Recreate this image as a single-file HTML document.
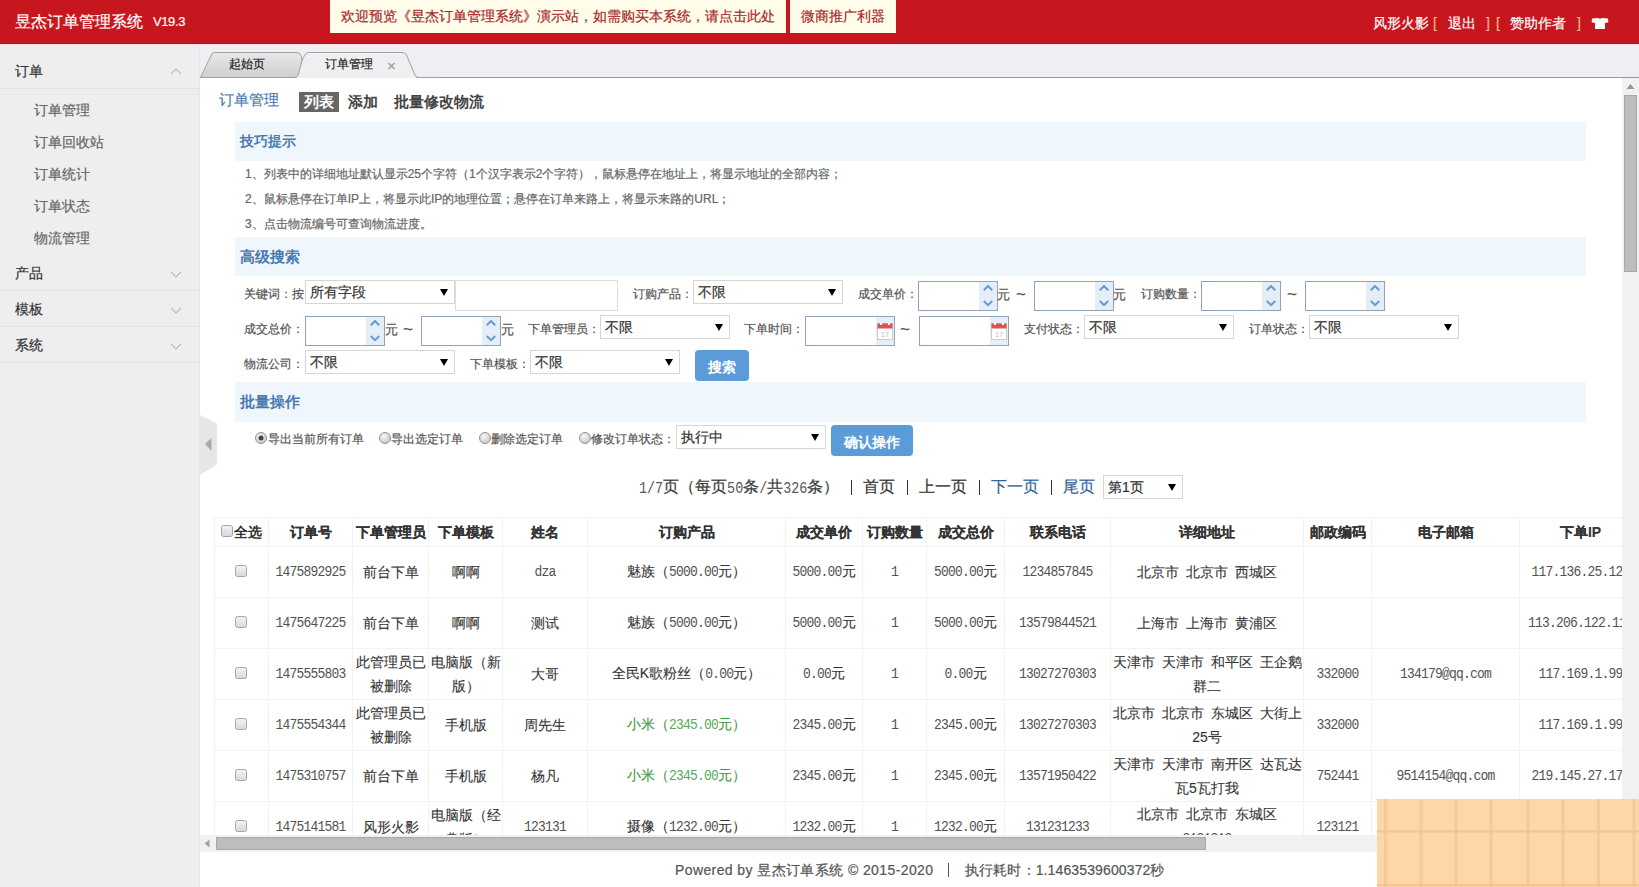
<!DOCTYPE html><html><head><meta charset="utf-8"><style>
*{margin:0;padding:0;box-sizing:border-box}
html,body{width:1639px;height:887px;overflow:hidden;background:#fff;font-family:"Liberation Sans",sans-serif;color:#333;-webkit-text-stroke-width:0.2px}
.a{position:absolute;white-space:nowrap}
#hdr{position:absolute;left:0;top:0;width:1639px;height:45px;background:linear-gradient(#c8161f 0,#c8161f 41px,#bd1a26 41px,#bd1a26 43px,#a11623 43px,#a11623 44px,#fde6e3 44px);z-index:5}
#side{position:absolute;left:0;top:43px;width:200px;height:844px;background:#eee;border-right:1px solid #e6e6e8}
#tabbar{position:absolute;left:200px;top:43px;width:1439px;height:35px;background:#efeef3}
#content{position:absolute;left:200px;top:78px;width:1439px;height:774px;background:#fff;overflow:hidden}
#footer{position:absolute;left:200px;top:852px;width:1439px;height:35px;background:#fff}
.note{position:absolute;top:0;height:33px;background:#fffcea;color:#a82a2a;font-size:14px;line-height:33px}
.mh{position:absolute;left:0;width:199px;height:36px;border-bottom:1px solid #e2e2e2;font-size:14px;color:#333;line-height:36px;padding-left:15px}
.mi{position:absolute;left:34px;font-size:14px;color:#666;line-height:32px;height:32px;white-space:nowrap}
.chev{position:absolute;left:171px}
.sec{position:absolute;left:35px;width:1351px;background:#eff6fc;color:#4a7bb0;font-weight:bold;font-size:15px;padding-left:5px}
.tip{position:absolute;left:45px;font-size:12px;color:#666;line-height:25px;white-space:nowrap}
.lbl{position:absolute;font-size:12px;color:#555;line-height:24px;white-space:nowrap}
.sel{position:absolute;width:150px;height:24px;border:1px solid #d6d6d6;background:#fff;font-size:14px;color:#333;line-height:22px;padding-left:4px;white-space:nowrap}
.sel:after{content:"";position:absolute;right:6px;top:8px;border-left:4px solid transparent;border-right:4px solid transparent;border-top:7px solid #000}
.num{position:absolute;width:80px;height:30px;border:1px solid #93a3b5;background:#fff}
.num .sp{position:absolute;right:0;top:0;width:18px;height:28px;background:#e4eef9}
.btn{position:absolute;background:#5b9bd8;color:#fff;font-weight:bold;font-size:14px;border-radius:4px;text-align:center;-webkit-text-stroke-width:0}
[style*="bold"],.sec{-webkit-text-stroke-width:0}
</style></head><body>
<div id="hdr">
<div class="a" style="left:15px;top:11px;font-size:16px;line-height:22px;color:#fff">昱杰订单管理系统</div>
<div class="a" style="left:153px;top:12px;font-size:13px;line-height:20px;color:#fff;letter-spacing:-0.4px">V19.3</div>
<div class="note" style="left:330px;width:456px;padding-left:11px">欢迎预览《昱杰订单管理系统》演示站，如需购买本系统，请点击此处</div>
<div class="note" style="left:790px;width:106px;padding-left:11px">微商推广利器</div>
<div class="a" style="left:1373px;top:12px;font-size:14px;line-height:22px;color:#fff">风形火影</div>
<div class="a" style="left:1433px;top:12px;font-size:14px;line-height:22px;color:#f5b98a">[</div>
<div class="a" style="left:1448px;top:12px;font-size:14px;line-height:22px;color:#fff">退出</div>
<div class="a" style="left:1486px;top:12px;font-size:14px;line-height:22px;color:#f5b98a">]</div>
<div class="a" style="left:1496px;top:12px;font-size:14px;line-height:22px;color:#f5b98a">[</div>
<div class="a" style="left:1510px;top:12px;font-size:14px;line-height:22px;color:#fff">赞助作者</div>
<div class="a" style="left:1577px;top:12px;font-size:14px;line-height:22px;color:#f5b98a">]</div>
<svg class="a" style="left:1591px;top:17px" width="18" height="12" viewBox="0 0 18 12"><path d="M1 1.5 L7 1 Q9 2.3 11 1 L17 1.5 L17.3 5.5 L14 5.8 L14 12 L4 12 L4 5.8 L0.7 5.5 Z" fill="#fff"/></svg>
</div>
<div id="side">
<div class="mh" style="top:10px">订单</div><svg class="chev" style="top:25px" width="11" height="7" viewBox="0 0 11 7"><path d="M0 6 L5 1 L10 6" fill="none" stroke="#bbb" stroke-width="1.2"/></svg>
<div class="a" style="left:0;top:51px;width:199px;height:1px;background:#e8e8e8"></div>
<div class="mi" style="top:51px">订单管理</div>
<div class="mi" style="top:83px">订单回收站</div>
<div class="mi" style="top:115px">订单统计</div>
<div class="mi" style="top:147px">订单状态</div>
<div class="mi" style="top:179px">物流管理</div>
<div class="mh" style="top:212px">产品</div><svg class="chev" style="top:228px" width="11" height="7" viewBox="0 0 11 7"><path d="M0 1 L5 6 L10 1" fill="none" stroke="#bbb" stroke-width="1.2"/></svg>
<div class="mh" style="top:248px">模板</div><svg class="chev" style="top:264px" width="11" height="7" viewBox="0 0 11 7"><path d="M0 1 L5 6 L10 1" fill="none" stroke="#bbb" stroke-width="1.2"/></svg>
<div class="mh" style="top:284px">系统</div><svg class="chev" style="top:300px" width="11" height="7" viewBox="0 0 11 7"><path d="M0 1 L5 6 L10 1" fill="none" stroke="#bbb" stroke-width="1.2"/></svg>
</div>
<div id="tabbar">
<div class="a" style="left:0;top:34px;width:1439px;height:1px;background:#999"></div>
<svg class="a" style="left:0;top:0" width="240" height="35" viewBox="0 0 240 35">
<defs><linearGradient id="g1" x1="0" y1="0" x2="0" y2="1"><stop offset="0" stop-color="#e8e8e8"/><stop offset="1" stop-color="#cfcfcf"/></linearGradient></defs>
<path d="M95 35 L102 18 Q104.5 10.5 108 9.5 L202 9.5 Q205 9.5 206.5 12 L215 32 Q216 34.5 219 34.5 L240 34.5 L240 35 Z" fill="#efeff1" stroke="#a0a0a0" stroke-width="1"/><path d="M108 10.5 L202 10.5" stroke="#fafafa" stroke-width="1"/>
<rect x="97" y="34" width="119" height="2" fill="#eeeef1"/>
<path d="M0.5 34.5 L12 10.5 Q13 9.5 15 9.5 L96 9.5 Q101.5 9.5 102 17 L98.5 31 Q97.5 34.5 94.5 34.5 Z" fill="url(#g1)" stroke="#a0a0a0" stroke-width="1"/>
</svg>
<div class="a" style="left:29px;top:12px;font-size:12px;line-height:18px;color:#222">起始页</div>
<div class="a" style="left:125px;top:12px;font-size:12px;line-height:18px;color:#222">订单管理</div>
<div class="a" style="left:187px;top:14px;font-size:15px;line-height:18px;color:#9a9a9a">×</div>
</div>
<div id="content">
<div class="a" style="left:19px;top:12px;font-size:15px;line-height:20px;color:#4a7bb0">订单管理</div>
<div class="a" style="left:99px;top:14px;width:40px;height:20px;background:#666;color:#fff;font-weight:bold;font-size:15px;line-height:20px;text-align:center">列表</div>
<div class="a" style="left:148px;top:14px;font-size:15px;line-height:20px;color:#444;font-weight:bold">添加</div>
<div class="a" style="left:194px;top:14px;font-size:15px;line-height:20px;color:#444;font-weight:bold">批量修改物流</div>
<div class="sec" style="left:35px;top:44px;height:39px;line-height:39px;font-size:14px">技巧提示</div>
<div class="tip" style="left:45px;top:84px">1、列表中的详细地址默认显示25个字符（1个汉字表示2个字符），鼠标悬停在地址上，将显示地址的全部内容；</div>
<div class="tip" style="left:45px;top:109px">2、鼠标悬停在订单IP上，将显示此IP的地理位置；悬停在订单来路上，将显示来路的URL；</div>
<div class="tip" style="left:45px;top:134px">3、点击物流编号可查询物流进度。</div>
<div class="sec" style="left:35px;top:159px;height:39px;line-height:39px">高级搜索</div>
<div class="sec" style="left:35px;top:304px;height:40px;line-height:40px">批量操作</div>
<div class="lbl" style="left:44px;top:204px">关键词：按</div>
<div class="sel" style="left:105px;top:202px;width:150px;font-size:14px">所有字段</div>
<div class="a" style="left:255px;top:202px;width:163px;height:31px;border:1px solid #dcdcdc;background:#fff"></div>
<div class="lbl" style="left:433px;top:204px">订购产品：</div>
<div class="sel" style="left:493px;top:202px;width:150px;font-size:14px">不限</div>
<div class="lbl" style="left:658px;top:204px">成交单价：</div>
<div class="num" style="left:718px;top:203px"><div class="sp"><svg style="position:absolute;left:4px;top:3px" width="10" height="22" viewBox="0 0 10 22"><path d="M0.8 5.2 L5 1 L9.2 5.2 M0.8 16 L5 20.2 L9.2 16" fill="none" stroke="#6b9ac8" stroke-width="2"/></svg></div></div>
<div class="a" style="left:797px;top:207px;font-size:13px;line-height:20px;color:#555;">元</div>
<div class="a" style="left:816px;top:207px;font-size:17px;line-height:20px;color:#555;">~</div>
<div class="num" style="left:834px;top:203px"><div class="sp"><svg style="position:absolute;left:4px;top:3px" width="10" height="22" viewBox="0 0 10 22"><path d="M0.8 5.2 L5 1 L9.2 5.2 M0.8 16 L5 20.2 L9.2 16" fill="none" stroke="#6b9ac8" stroke-width="2"/></svg></div></div>
<div class="a" style="left:913px;top:207px;font-size:13px;line-height:20px;color:#555;">元</div>
<div class="lbl" style="left:941px;top:204px">订购数量：</div>
<div class="num" style="left:1001px;top:203px"><div class="sp"><svg style="position:absolute;left:4px;top:3px" width="10" height="22" viewBox="0 0 10 22"><path d="M0.8 5.2 L5 1 L9.2 5.2 M0.8 16 L5 20.2 L9.2 16" fill="none" stroke="#6b9ac8" stroke-width="2"/></svg></div></div>
<div class="a" style="left:1087px;top:207px;font-size:17px;line-height:20px;color:#555;">~</div>
<div class="num" style="left:1105px;top:203px"><div class="sp"><svg style="position:absolute;left:4px;top:3px" width="10" height="22" viewBox="0 0 10 22"><path d="M0.8 5.2 L5 1 L9.2 5.2 M0.8 16 L5 20.2 L9.2 16" fill="none" stroke="#6b9ac8" stroke-width="2"/></svg></div></div>
<div class="lbl" style="left:44px;top:239px">成交总价：</div>
<div class="num" style="left:105px;top:238px"><div class="sp"><svg style="position:absolute;left:4px;top:3px" width="10" height="22" viewBox="0 0 10 22"><path d="M0.8 5.2 L5 1 L9.2 5.2 M0.8 16 L5 20.2 L9.2 16" fill="none" stroke="#6b9ac8" stroke-width="2"/></svg></div></div>
<div class="a" style="left:185px;top:242px;font-size:13px;line-height:20px;color:#555;">元</div>
<div class="a" style="left:203px;top:242px;font-size:17px;line-height:20px;color:#555;">~</div>
<div class="num" style="left:221px;top:238px"><div class="sp"><svg style="position:absolute;left:4px;top:3px" width="10" height="22" viewBox="0 0 10 22"><path d="M0.8 5.2 L5 1 L9.2 5.2 M0.8 16 L5 20.2 L9.2 16" fill="none" stroke="#6b9ac8" stroke-width="2"/></svg></div></div>
<div class="a" style="left:301px;top:242px;font-size:13px;line-height:20px;color:#555;">元</div>
<div class="lbl" style="left:328px;top:239px">下单管理员：</div>
<div class="sel" style="left:400px;top:237px;width:130px;font-size:14px">不限</div>
<div class="lbl" style="left:544px;top:239px">下单时间：</div>
<div class="num" style="left:605px;top:238px;width:90px"><div class="sp" style="width:18px;background:#e6eef7"><svg style="position:absolute;left:1px;top:6px" width="16" height="17" viewBox="0 0 16 17"><rect x="0.5" y="0.5" width="15" height="16" fill="#fff" stroke="#ccc"/><rect x="0.5" y="0.5" width="15" height="5" fill="#e05252"/><rect x="3" y="0" width="2" height="2" fill="#fff"/><rect x="11" y="0" width="2" height="2" fill="#fff"/><text x="8" y="14" font-size="7" fill="#bbb" text-anchor="middle" font-family="Liberation Sans">17</text></svg></div></div>
<div class="a" style="left:700px;top:242px;font-size:17px;line-height:20px;color:#555;">~</div>
<div class="num" style="left:719px;top:238px;width:90px"><div class="sp" style="width:18px;background:#e6eef7"><svg style="position:absolute;left:1px;top:6px" width="16" height="17" viewBox="0 0 16 17"><rect x="0.5" y="0.5" width="15" height="16" fill="#fff" stroke="#ccc"/><rect x="0.5" y="0.5" width="15" height="5" fill="#e05252"/><rect x="3" y="0" width="2" height="2" fill="#fff"/><rect x="11" y="0" width="2" height="2" fill="#fff"/><text x="8" y="14" font-size="7" fill="#bbb" text-anchor="middle" font-family="Liberation Sans">17</text></svg></div></div>
<div class="lbl" style="left:824px;top:239px">支付状态：</div>
<div class="sel" style="left:884px;top:237px;width:150px;font-size:14px">不限</div>
<div class="lbl" style="left:1049px;top:239px">订单状态：</div>
<div class="sel" style="left:1109px;top:237px;width:150px;font-size:14px">不限</div>
<div class="lbl" style="left:44px;top:274px">物流公司：</div>
<div class="sel" style="left:105px;top:272px;width:150px;font-size:14px">不限</div>
<div class="lbl" style="left:270px;top:274px">下单模板：</div>
<div class="sel" style="left:330px;top:272px;width:150px;font-size:14px">不限</div>
<div class="btn" style="left:495px;top:272px;width:54px;height:31px;line-height:35px">搜索</div>
<svg class="a" style="left:55px;top:354px" width="12" height="12" viewBox="0 0 12 12"><defs><radialGradient id="rg255" cx="0.4" cy="0.35" r="0.7"><stop offset="0" stop-color="#f8f8f8"/><stop offset="1" stop-color="#c4c4c4"/></radialGradient></defs><circle cx="6" cy="6" r="5.5" fill="url(#rg255)" stroke="#939393"/><circle cx="6" cy="6" r="2.5" fill="#444"/></svg>
<div class="a" style="left:68px;top:351px;font-size:12px;line-height:20px;color:#555;">导出当前所有订单</div>
<svg class="a" style="left:179px;top:354px" width="12" height="12" viewBox="0 0 12 12"><defs><radialGradient id="rg379" cx="0.4" cy="0.35" r="0.7"><stop offset="0" stop-color="#f8f8f8"/><stop offset="1" stop-color="#c4c4c4"/></radialGradient></defs><circle cx="6" cy="6" r="5.5" fill="url(#rg379)" stroke="#939393"/></svg>
<div class="a" style="left:191px;top:351px;font-size:12px;line-height:20px;color:#555;">导出选定订单</div>
<svg class="a" style="left:279px;top:354px" width="12" height="12" viewBox="0 0 12 12"><defs><radialGradient id="rg479" cx="0.4" cy="0.35" r="0.7"><stop offset="0" stop-color="#f8f8f8"/><stop offset="1" stop-color="#c4c4c4"/></radialGradient></defs><circle cx="6" cy="6" r="5.5" fill="url(#rg479)" stroke="#939393"/></svg>
<div class="a" style="left:291px;top:351px;font-size:12px;line-height:20px;color:#555;">删除选定订单</div>
<svg class="a" style="left:379px;top:354px" width="12" height="12" viewBox="0 0 12 12"><defs><radialGradient id="rg579" cx="0.4" cy="0.35" r="0.7"><stop offset="0" stop-color="#f8f8f8"/><stop offset="1" stop-color="#c4c4c4"/></radialGradient></defs><circle cx="6" cy="6" r="5.5" fill="url(#rg579)" stroke="#939393"/></svg>
<div class="a" style="left:391px;top:351px;font-size:12px;line-height:20px;color:#555;">修改订单状态：</div>
<div class="sel" style="left:476px;top:347px;width:150px;font-size:14px">执行中</div>
<div class="btn" style="left:631px;top:347px;width:82px;height:31px;line-height:35px">确认操作</div>
<div class="a" style="left:439px;top:399px;font-size:16px;line-height:20px;color:#3a3a3a"><span style="font-family:Liberation Mono,monospace;font-size:13.4px;display:inline-block;transform:scaleY(1.2);-webkit-text-stroke-width:0;opacity:0.85">1/7</span>页（每页<span style="font-family:Liberation Mono,monospace;font-size:13.4px;display:inline-block;transform:scaleY(1.2);-webkit-text-stroke-width:0;opacity:0.85">50</span>条<span style="font-family:Liberation Mono,monospace;font-size:13.4px;display:inline-block;transform:scaleY(1.2);-webkit-text-stroke-width:0;opacity:0.85">/</span>共<span style="font-family:Liberation Mono,monospace;font-size:13.4px;display:inline-block;transform:scaleY(1.2);-webkit-text-stroke-width:0;opacity:0.85">326</span>条）</div>
<div class="a" style="left:651px;top:402px;width:1px;height:15px;background:#333"></div>
<div class="a" style="left:707px;top:402px;width:1px;height:15px;background:#333"></div>
<div class="a" style="left:779px;top:402px;width:1px;height:15px;background:#333"></div>
<div class="a" style="left:851px;top:402px;width:1px;height:15px;background:#333"></div>
<div class="a" style="left:663px;top:399px;font-size:16px;line-height:20px;color:#333">首页</div>
<div class="a" style="left:719px;top:399px;font-size:16px;line-height:20px;color:#333">上一页</div>
<div class="a" style="left:791px;top:399px;font-size:16px;line-height:20px;color:#336699">下一页</div>
<div class="a" style="left:863px;top:399px;font-size:16px;line-height:20px;color:#336699">尾页</div>
<div class="sel" style="left:903px;top:397px;width:80px;font-size:14px">第1页</div>
<div class="a" style="left:14px;top:439px;width:1px;height:335px;background:#f2f2f2"></div>
<div class="a" style="left:68px;top:439px;width:1px;height:335px;background:#f2f2f2"></div>
<div class="a" style="left:152px;top:439px;width:1px;height:335px;background:#f2f2f2"></div>
<div class="a" style="left:228px;top:439px;width:1px;height:335px;background:#f2f2f2"></div>
<div class="a" style="left:302px;top:439px;width:1px;height:335px;background:#f2f2f2"></div>
<div class="a" style="left:387px;top:439px;width:1px;height:335px;background:#f2f2f2"></div>
<div class="a" style="left:585px;top:439px;width:1px;height:335px;background:#f2f2f2"></div>
<div class="a" style="left:662px;top:439px;width:1px;height:335px;background:#f2f2f2"></div>
<div class="a" style="left:726px;top:439px;width:1px;height:335px;background:#f2f2f2"></div>
<div class="a" style="left:804px;top:439px;width:1px;height:335px;background:#f2f2f2"></div>
<div class="a" style="left:910px;top:439px;width:1px;height:335px;background:#f2f2f2"></div>
<div class="a" style="left:1103px;top:439px;width:1px;height:335px;background:#f2f2f2"></div>
<div class="a" style="left:1171px;top:439px;width:1px;height:335px;background:#f2f2f2"></div>
<div class="a" style="left:1319px;top:439px;width:1px;height:335px;background:#f2f2f2"></div>
<div class="a" style="left:1441px;top:439px;width:1px;height:335px;background:#f2f2f2"></div>
<div class="a" style="left:14px;top:439px;width:1427px;height:1px;background:#f2f2f2"></div>
<div class="a" style="left:14px;top:468px;width:1427px;height:1px;background:#f2f2f2"></div>
<div class="a" style="left:14px;top:519px;width:1427px;height:1px;background:#f2f2f2"></div>
<div class="a" style="left:14px;top:570px;width:1427px;height:1px;background:#f2f2f2"></div>
<div class="a" style="left:14px;top:621px;width:1427px;height:1px;background:#f2f2f2"></div>
<div class="a" style="left:14px;top:672px;width:1427px;height:1px;background:#f2f2f2"></div>
<div class="a" style="left:14px;top:723px;width:1427px;height:1px;background:#f2f2f2"></div>
<div class="a" style="left:14px;top:774px;width:1427px;height:1px;background:#f2f2f2"></div>
<div class="a" style="left:34px;top:444px;font-size:14px;line-height:20px;font-weight:bold;color:#333">全选</div>
<svg class="a" style="left:21px;top:447px" width="12" height="12" viewBox="0 0 12 12"><defs><linearGradient id="cg" x1="0" y1="0" x2="0" y2="1"><stop offset="0" stop-color="#f4f4f4"/><stop offset="1" stop-color="#d8d8d8"/></linearGradient></defs><rect x="0.5" y="0.5" width="11" height="11" rx="2" fill="url(#cg)" stroke="#a6a6a6"/></svg>
<div class="a" style="left:69px;top:440px;width:83px;height:28px;display:flex;align-items:center;justify-content:center;text-align:center;white-space:nowrap;line-height:24px;font-size:14px;color:#333;padding:0 2px 0;-webkit-text-stroke-width:0.1px;font-weight:bold"><div>订单号</div></div>
<div class="a" style="left:153px;top:440px;width:75px;height:28px;display:flex;align-items:center;justify-content:center;text-align:center;white-space:nowrap;line-height:24px;font-size:14px;color:#333;padding:0 2px 0;-webkit-text-stroke-width:0.1px;font-weight:bold"><div>下单管理员</div></div>
<div class="a" style="left:229px;top:440px;width:73px;height:28px;display:flex;align-items:center;justify-content:center;text-align:center;white-space:nowrap;line-height:24px;font-size:14px;color:#333;padding:0 2px 0;-webkit-text-stroke-width:0.1px;font-weight:bold"><div>下单模板</div></div>
<div class="a" style="left:303px;top:440px;width:84px;height:28px;display:flex;align-items:center;justify-content:center;text-align:center;white-space:nowrap;line-height:24px;font-size:14px;color:#333;padding:0 2px 0;-webkit-text-stroke-width:0.1px;font-weight:bold"><div>姓名</div></div>
<div class="a" style="left:388px;top:440px;width:197px;height:28px;display:flex;align-items:center;justify-content:center;text-align:center;white-space:nowrap;line-height:24px;font-size:14px;color:#333;padding:0 2px 0;-webkit-text-stroke-width:0.1px;font-weight:bold"><div>订购产品</div></div>
<div class="a" style="left:586px;top:440px;width:76px;height:28px;display:flex;align-items:center;justify-content:center;text-align:center;white-space:nowrap;line-height:24px;font-size:14px;color:#333;padding:0 2px 0;-webkit-text-stroke-width:0.1px;font-weight:bold"><div>成交单价</div></div>
<div class="a" style="left:663px;top:440px;width:63px;height:28px;display:flex;align-items:center;justify-content:center;text-align:center;white-space:nowrap;line-height:24px;font-size:14px;color:#333;padding:0 2px 0;-webkit-text-stroke-width:0.1px;font-weight:bold"><div>订购数量</div></div>
<div class="a" style="left:727px;top:440px;width:77px;height:28px;display:flex;align-items:center;justify-content:center;text-align:center;white-space:nowrap;line-height:24px;font-size:14px;color:#333;padding:0 2px 0;-webkit-text-stroke-width:0.1px;font-weight:bold"><div>成交总价</div></div>
<div class="a" style="left:805px;top:440px;width:105px;height:28px;display:flex;align-items:center;justify-content:center;text-align:center;white-space:nowrap;line-height:24px;font-size:14px;color:#333;padding:0 2px 0;-webkit-text-stroke-width:0.1px;font-weight:bold"><div>联系电话</div></div>
<div class="a" style="left:911px;top:440px;width:192px;height:28px;display:flex;align-items:center;justify-content:center;text-align:center;white-space:nowrap;line-height:24px;font-size:14px;color:#333;padding:0 2px 0;-webkit-text-stroke-width:0.1px;font-weight:bold"><div>详细地址</div></div>
<div class="a" style="left:1104px;top:440px;width:67px;height:28px;display:flex;align-items:center;justify-content:center;text-align:center;white-space:nowrap;line-height:24px;font-size:14px;color:#333;padding:0 2px 0;-webkit-text-stroke-width:0.1px;font-weight:bold"><div>邮政编码</div></div>
<div class="a" style="left:1172px;top:440px;width:147px;height:28px;display:flex;align-items:center;justify-content:center;text-align:center;white-space:nowrap;line-height:24px;font-size:14px;color:#333;padding:0 2px 0;-webkit-text-stroke-width:0.1px;font-weight:bold"><div>电子邮箱</div></div>
<div class="a" style="left:1320px;top:440px;width:121px;height:28px;display:flex;align-items:center;justify-content:center;text-align:center;white-space:nowrap;line-height:24px;font-size:14px;color:#333;padding:0 2px 0;-webkit-text-stroke-width:0.1px;font-weight:bold"><div>下单IP</div></div>
<svg class="a" style="left:35px;top:487px" width="12" height="12" viewBox="0 0 12 12"><defs><linearGradient id="cg" x1="0" y1="0" x2="0" y2="1"><stop offset="0" stop-color="#f4f4f4"/><stop offset="1" stop-color="#d8d8d8"/></linearGradient></defs><rect x="0.5" y="0.5" width="11" height="11" rx="2" fill="url(#cg)" stroke="#a6a6a6"/></svg>
<div class="a" style="left:69px;top:469px;width:83px;height:50px;display:flex;align-items:center;justify-content:center;text-align:center;white-space:nowrap;line-height:24px;font-size:14px;color:#333;padding:0 2px 0;-webkit-text-stroke-width:0.1px;"><div><span style="font-family:'Liberation Mono',monospace;font-size:13px;letter-spacing:-0.8px;display:inline-block;transform:scaleY(1.15);-webkit-text-stroke-width:0;opacity:0.85">1475892925</span></div></div>
<div class="a" style="left:153px;top:469px;width:75px;height:50px;display:flex;align-items:center;justify-content:center;text-align:center;white-space:nowrap;line-height:24px;font-size:14px;color:#333;padding:0 2px 0;-webkit-text-stroke-width:0.1px;"><div>前台下单</div></div>
<div class="a" style="left:229px;top:469px;width:73px;height:50px;display:flex;align-items:center;justify-content:center;text-align:center;white-space:nowrap;line-height:24px;font-size:14px;color:#333;padding:0 2px 0;-webkit-text-stroke-width:0.1px;"><div>啊啊</div></div>
<div class="a" style="left:303px;top:469px;width:84px;height:50px;display:flex;align-items:center;justify-content:center;text-align:center;white-space:nowrap;line-height:24px;font-size:14px;color:#333;padding:0 2px 0;-webkit-text-stroke-width:0.1px;"><div><span style="font-family:'Liberation Mono',monospace;font-size:13px;letter-spacing:-0.8px;display:inline-block;transform:scaleY(1.15);-webkit-text-stroke-width:0;opacity:0.85">dza</span></div></div>
<div class="a" style="left:388px;top:469px;width:197px;height:50px;display:flex;align-items:center;justify-content:center;text-align:center;white-space:nowrap;line-height:24px;font-size:14px;color:#333;padding:0 2px 0;-webkit-text-stroke-width:0.1px;"><div>魅族（<span style="font-family:'Liberation Mono',monospace;font-size:13px;letter-spacing:-0.8px;display:inline-block;transform:scaleY(1.15);-webkit-text-stroke-width:0;opacity:0.85">5000.00</span>元）</div></div>
<div class="a" style="left:586px;top:469px;width:76px;height:50px;display:flex;align-items:center;justify-content:center;text-align:center;white-space:nowrap;line-height:24px;font-size:14px;color:#333;padding:0 2px 0;-webkit-text-stroke-width:0.1px;"><div><span style="font-family:'Liberation Mono',monospace;font-size:13px;letter-spacing:-0.8px;display:inline-block;transform:scaleY(1.15);-webkit-text-stroke-width:0;opacity:0.85">5000.00</span>元</div></div>
<div class="a" style="left:663px;top:469px;width:63px;height:50px;display:flex;align-items:center;justify-content:center;text-align:center;white-space:nowrap;line-height:24px;font-size:14px;color:#333;padding:0 2px 0;-webkit-text-stroke-width:0.1px;"><div><span style="font-family:'Liberation Mono',monospace;font-size:13px;letter-spacing:-0.8px;display:inline-block;transform:scaleY(1.15);-webkit-text-stroke-width:0;opacity:0.85">1</span></div></div>
<div class="a" style="left:727px;top:469px;width:77px;height:50px;display:flex;align-items:center;justify-content:center;text-align:center;white-space:nowrap;line-height:24px;font-size:14px;color:#333;padding:0 2px 0;-webkit-text-stroke-width:0.1px;"><div><span style="font-family:'Liberation Mono',monospace;font-size:13px;letter-spacing:-0.8px;display:inline-block;transform:scaleY(1.15);-webkit-text-stroke-width:0;opacity:0.85">5000.00</span>元</div></div>
<div class="a" style="left:805px;top:469px;width:105px;height:50px;display:flex;align-items:center;justify-content:center;text-align:center;white-space:nowrap;line-height:24px;font-size:14px;color:#333;padding:0 2px 0;-webkit-text-stroke-width:0.1px;"><div><span style="font-family:'Liberation Mono',monospace;font-size:13px;letter-spacing:-0.8px;display:inline-block;transform:scaleY(1.15);-webkit-text-stroke-width:0;opacity:0.85">1234857845</span></div></div>
<div class="a" style="left:911px;top:469px;width:192px;height:50px;display:flex;align-items:center;justify-content:center;text-align:center;white-space:nowrap;line-height:24px;font-size:14px;color:#333;padding:0 2px 0;-webkit-text-stroke-width:0.1px;"><div>北京市&ensp;北京市&ensp;西城区</div></div>
<div class="a" style="left:1104px;top:469px;width:67px;height:50px;display:flex;align-items:center;justify-content:center;text-align:center;white-space:nowrap;line-height:24px;font-size:14px;color:#333;padding:0 2px 0;-webkit-text-stroke-width:0.1px;"><div></div></div>
<div class="a" style="left:1172px;top:469px;width:147px;height:50px;display:flex;align-items:center;justify-content:center;text-align:center;white-space:nowrap;line-height:24px;font-size:14px;color:#333;padding:0 2px 0;-webkit-text-stroke-width:0.1px;"><div></div></div>
<div class="a" style="left:1320px;top:469px;width:121px;height:50px;display:flex;align-items:center;justify-content:center;text-align:center;white-space:nowrap;line-height:24px;font-size:14px;color:#333;padding:0 2px 0;-webkit-text-stroke-width:0.1px;"><div><span style="font-family:'Liberation Mono',monospace;font-size:13px;letter-spacing:-0.8px;display:inline-block;transform:scaleY(1.15);-webkit-text-stroke-width:0;opacity:0.85">117.136.25.124</span></div></div>
<svg class="a" style="left:35px;top:538px" width="12" height="12" viewBox="0 0 12 12"><defs><linearGradient id="cg" x1="0" y1="0" x2="0" y2="1"><stop offset="0" stop-color="#f4f4f4"/><stop offset="1" stop-color="#d8d8d8"/></linearGradient></defs><rect x="0.5" y="0.5" width="11" height="11" rx="2" fill="url(#cg)" stroke="#a6a6a6"/></svg>
<div class="a" style="left:69px;top:520px;width:83px;height:50px;display:flex;align-items:center;justify-content:center;text-align:center;white-space:nowrap;line-height:24px;font-size:14px;color:#333;padding:0 2px 0;-webkit-text-stroke-width:0.1px;"><div><span style="font-family:'Liberation Mono',monospace;font-size:13px;letter-spacing:-0.8px;display:inline-block;transform:scaleY(1.15);-webkit-text-stroke-width:0;opacity:0.85">1475647225</span></div></div>
<div class="a" style="left:153px;top:520px;width:75px;height:50px;display:flex;align-items:center;justify-content:center;text-align:center;white-space:nowrap;line-height:24px;font-size:14px;color:#333;padding:0 2px 0;-webkit-text-stroke-width:0.1px;"><div>前台下单</div></div>
<div class="a" style="left:229px;top:520px;width:73px;height:50px;display:flex;align-items:center;justify-content:center;text-align:center;white-space:nowrap;line-height:24px;font-size:14px;color:#333;padding:0 2px 0;-webkit-text-stroke-width:0.1px;"><div>啊啊</div></div>
<div class="a" style="left:303px;top:520px;width:84px;height:50px;display:flex;align-items:center;justify-content:center;text-align:center;white-space:nowrap;line-height:24px;font-size:14px;color:#333;padding:0 2px 0;-webkit-text-stroke-width:0.1px;"><div>测试</div></div>
<div class="a" style="left:388px;top:520px;width:197px;height:50px;display:flex;align-items:center;justify-content:center;text-align:center;white-space:nowrap;line-height:24px;font-size:14px;color:#333;padding:0 2px 0;-webkit-text-stroke-width:0.1px;"><div>魅族（<span style="font-family:'Liberation Mono',monospace;font-size:13px;letter-spacing:-0.8px;display:inline-block;transform:scaleY(1.15);-webkit-text-stroke-width:0;opacity:0.85">5000.00</span>元）</div></div>
<div class="a" style="left:586px;top:520px;width:76px;height:50px;display:flex;align-items:center;justify-content:center;text-align:center;white-space:nowrap;line-height:24px;font-size:14px;color:#333;padding:0 2px 0;-webkit-text-stroke-width:0.1px;"><div><span style="font-family:'Liberation Mono',monospace;font-size:13px;letter-spacing:-0.8px;display:inline-block;transform:scaleY(1.15);-webkit-text-stroke-width:0;opacity:0.85">5000.00</span>元</div></div>
<div class="a" style="left:663px;top:520px;width:63px;height:50px;display:flex;align-items:center;justify-content:center;text-align:center;white-space:nowrap;line-height:24px;font-size:14px;color:#333;padding:0 2px 0;-webkit-text-stroke-width:0.1px;"><div><span style="font-family:'Liberation Mono',monospace;font-size:13px;letter-spacing:-0.8px;display:inline-block;transform:scaleY(1.15);-webkit-text-stroke-width:0;opacity:0.85">1</span></div></div>
<div class="a" style="left:727px;top:520px;width:77px;height:50px;display:flex;align-items:center;justify-content:center;text-align:center;white-space:nowrap;line-height:24px;font-size:14px;color:#333;padding:0 2px 0;-webkit-text-stroke-width:0.1px;"><div><span style="font-family:'Liberation Mono',monospace;font-size:13px;letter-spacing:-0.8px;display:inline-block;transform:scaleY(1.15);-webkit-text-stroke-width:0;opacity:0.85">5000.00</span>元</div></div>
<div class="a" style="left:805px;top:520px;width:105px;height:50px;display:flex;align-items:center;justify-content:center;text-align:center;white-space:nowrap;line-height:24px;font-size:14px;color:#333;padding:0 2px 0;-webkit-text-stroke-width:0.1px;"><div><span style="font-family:'Liberation Mono',monospace;font-size:13px;letter-spacing:-0.8px;display:inline-block;transform:scaleY(1.15);-webkit-text-stroke-width:0;opacity:0.85">13579844521</span></div></div>
<div class="a" style="left:911px;top:520px;width:192px;height:50px;display:flex;align-items:center;justify-content:center;text-align:center;white-space:nowrap;line-height:24px;font-size:14px;color:#333;padding:0 2px 0;-webkit-text-stroke-width:0.1px;"><div>上海市&ensp;上海市&ensp;黄浦区</div></div>
<div class="a" style="left:1104px;top:520px;width:67px;height:50px;display:flex;align-items:center;justify-content:center;text-align:center;white-space:nowrap;line-height:24px;font-size:14px;color:#333;padding:0 2px 0;-webkit-text-stroke-width:0.1px;"><div></div></div>
<div class="a" style="left:1172px;top:520px;width:147px;height:50px;display:flex;align-items:center;justify-content:center;text-align:center;white-space:nowrap;line-height:24px;font-size:14px;color:#333;padding:0 2px 0;-webkit-text-stroke-width:0.1px;"><div></div></div>
<div class="a" style="left:1320px;top:520px;width:121px;height:50px;display:flex;align-items:center;justify-content:center;text-align:center;white-space:nowrap;line-height:24px;font-size:14px;color:#333;padding:0 2px 0;-webkit-text-stroke-width:0.1px;"><div><span style="font-family:'Liberation Mono',monospace;font-size:13px;letter-spacing:-0.8px;display:inline-block;transform:scaleY(1.15);-webkit-text-stroke-width:0;opacity:0.85">113.206.122.118</span></div></div>
<svg class="a" style="left:35px;top:589px" width="12" height="12" viewBox="0 0 12 12"><defs><linearGradient id="cg" x1="0" y1="0" x2="0" y2="1"><stop offset="0" stop-color="#f4f4f4"/><stop offset="1" stop-color="#d8d8d8"/></linearGradient></defs><rect x="0.5" y="0.5" width="11" height="11" rx="2" fill="url(#cg)" stroke="#a6a6a6"/></svg>
<div class="a" style="left:69px;top:571px;width:83px;height:50px;display:flex;align-items:center;justify-content:center;text-align:center;white-space:nowrap;line-height:24px;font-size:14px;color:#333;padding:0 2px 0;-webkit-text-stroke-width:0.1px;"><div><span style="font-family:'Liberation Mono',monospace;font-size:13px;letter-spacing:-0.8px;display:inline-block;transform:scaleY(1.15);-webkit-text-stroke-width:0;opacity:0.85">1475555803</span></div></div>
<div class="a" style="left:153px;top:571px;width:75px;height:50px;display:flex;align-items:center;justify-content:center;text-align:center;white-space:nowrap;line-height:24px;font-size:14px;color:#333;padding:0 2px 0;-webkit-text-stroke-width:0.1px;"><div>此管理员已<br>被删除</div></div>
<div class="a" style="left:229px;top:571px;width:73px;height:50px;display:flex;align-items:center;justify-content:center;text-align:center;white-space:nowrap;line-height:24px;font-size:14px;color:#333;padding:0 2px 0;-webkit-text-stroke-width:0.1px;"><div>电脑版（新<br>版）</div></div>
<div class="a" style="left:303px;top:571px;width:84px;height:50px;display:flex;align-items:center;justify-content:center;text-align:center;white-space:nowrap;line-height:24px;font-size:14px;color:#333;padding:0 2px 0;-webkit-text-stroke-width:0.1px;"><div>大哥</div></div>
<div class="a" style="left:388px;top:571px;width:197px;height:50px;display:flex;align-items:center;justify-content:center;text-align:center;white-space:nowrap;line-height:24px;font-size:14px;color:#333;padding:0 2px 0;-webkit-text-stroke-width:0.1px;"><div>全民K歌粉丝（<span style="font-family:'Liberation Mono',monospace;font-size:13px;letter-spacing:-0.8px;display:inline-block;transform:scaleY(1.15);-webkit-text-stroke-width:0;opacity:0.85">0.00</span>元）</div></div>
<div class="a" style="left:586px;top:571px;width:76px;height:50px;display:flex;align-items:center;justify-content:center;text-align:center;white-space:nowrap;line-height:24px;font-size:14px;color:#333;padding:0 2px 0;-webkit-text-stroke-width:0.1px;"><div><span style="font-family:'Liberation Mono',monospace;font-size:13px;letter-spacing:-0.8px;display:inline-block;transform:scaleY(1.15);-webkit-text-stroke-width:0;opacity:0.85">0.00</span>元</div></div>
<div class="a" style="left:663px;top:571px;width:63px;height:50px;display:flex;align-items:center;justify-content:center;text-align:center;white-space:nowrap;line-height:24px;font-size:14px;color:#333;padding:0 2px 0;-webkit-text-stroke-width:0.1px;"><div><span style="font-family:'Liberation Mono',monospace;font-size:13px;letter-spacing:-0.8px;display:inline-block;transform:scaleY(1.15);-webkit-text-stroke-width:0;opacity:0.85">1</span></div></div>
<div class="a" style="left:727px;top:571px;width:77px;height:50px;display:flex;align-items:center;justify-content:center;text-align:center;white-space:nowrap;line-height:24px;font-size:14px;color:#333;padding:0 2px 0;-webkit-text-stroke-width:0.1px;"><div><span style="font-family:'Liberation Mono',monospace;font-size:13px;letter-spacing:-0.8px;display:inline-block;transform:scaleY(1.15);-webkit-text-stroke-width:0;opacity:0.85">0.00</span>元</div></div>
<div class="a" style="left:805px;top:571px;width:105px;height:50px;display:flex;align-items:center;justify-content:center;text-align:center;white-space:nowrap;line-height:24px;font-size:14px;color:#333;padding:0 2px 0;-webkit-text-stroke-width:0.1px;"><div><span style="font-family:'Liberation Mono',monospace;font-size:13px;letter-spacing:-0.8px;display:inline-block;transform:scaleY(1.15);-webkit-text-stroke-width:0;opacity:0.85">13027270303</span></div></div>
<div class="a" style="left:911px;top:571px;width:192px;height:50px;display:flex;align-items:center;justify-content:center;text-align:center;white-space:nowrap;line-height:24px;font-size:14px;color:#333;padding:0 2px 0;-webkit-text-stroke-width:0.1px;"><div>天津市&ensp;天津市&ensp;和平区&ensp;王企鹅<br>群二</div></div>
<div class="a" style="left:1104px;top:571px;width:67px;height:50px;display:flex;align-items:center;justify-content:center;text-align:center;white-space:nowrap;line-height:24px;font-size:14px;color:#333;padding:0 2px 0;-webkit-text-stroke-width:0.1px;"><div><span style="font-family:'Liberation Mono',monospace;font-size:13px;letter-spacing:-0.8px;display:inline-block;transform:scaleY(1.15);-webkit-text-stroke-width:0;opacity:0.85">332000</span></div></div>
<div class="a" style="left:1172px;top:571px;width:147px;height:50px;display:flex;align-items:center;justify-content:center;text-align:center;white-space:nowrap;line-height:24px;font-size:14px;color:#333;padding:0 2px 0;-webkit-text-stroke-width:0.1px;"><div><span style="font-family:'Liberation Mono',monospace;font-size:13px;letter-spacing:-0.8px;display:inline-block;transform:scaleY(1.15);-webkit-text-stroke-width:0;opacity:0.85">134179@qq.com</span></div></div>
<div class="a" style="left:1320px;top:571px;width:121px;height:50px;display:flex;align-items:center;justify-content:center;text-align:center;white-space:nowrap;line-height:24px;font-size:14px;color:#333;padding:0 2px 0;-webkit-text-stroke-width:0.1px;"><div><span style="font-family:'Liberation Mono',monospace;font-size:13px;letter-spacing:-0.8px;display:inline-block;transform:scaleY(1.15);-webkit-text-stroke-width:0;opacity:0.85">117.169.1.99</span></div></div>
<svg class="a" style="left:35px;top:640px" width="12" height="12" viewBox="0 0 12 12"><defs><linearGradient id="cg" x1="0" y1="0" x2="0" y2="1"><stop offset="0" stop-color="#f4f4f4"/><stop offset="1" stop-color="#d8d8d8"/></linearGradient></defs><rect x="0.5" y="0.5" width="11" height="11" rx="2" fill="url(#cg)" stroke="#a6a6a6"/></svg>
<div class="a" style="left:69px;top:622px;width:83px;height:50px;display:flex;align-items:center;justify-content:center;text-align:center;white-space:nowrap;line-height:24px;font-size:14px;color:#333;padding:0 2px 0;-webkit-text-stroke-width:0.1px;"><div><span style="font-family:'Liberation Mono',monospace;font-size:13px;letter-spacing:-0.8px;display:inline-block;transform:scaleY(1.15);-webkit-text-stroke-width:0;opacity:0.85">1475554344</span></div></div>
<div class="a" style="left:153px;top:622px;width:75px;height:50px;display:flex;align-items:center;justify-content:center;text-align:center;white-space:nowrap;line-height:24px;font-size:14px;color:#333;padding:0 2px 0;-webkit-text-stroke-width:0.1px;"><div>此管理员已<br>被删除</div></div>
<div class="a" style="left:229px;top:622px;width:73px;height:50px;display:flex;align-items:center;justify-content:center;text-align:center;white-space:nowrap;line-height:24px;font-size:14px;color:#333;padding:0 2px 0;-webkit-text-stroke-width:0.1px;"><div>手机版</div></div>
<div class="a" style="left:303px;top:622px;width:84px;height:50px;display:flex;align-items:center;justify-content:center;text-align:center;white-space:nowrap;line-height:24px;font-size:14px;color:#333;padding:0 2px 0;-webkit-text-stroke-width:0.1px;"><div>周先生</div></div>
<div class="a" style="left:388px;top:622px;width:197px;height:50px;display:flex;align-items:center;justify-content:center;text-align:center;white-space:nowrap;line-height:24px;font-size:14px;color:#333;padding:0 2px 0;-webkit-text-stroke-width:0.1px;"><div><span style="color:#3a9a3a">小米（<span style="font-family:'Liberation Mono',monospace;font-size:13px;letter-spacing:-0.8px;display:inline-block;transform:scaleY(1.15);-webkit-text-stroke-width:0;opacity:0.85">2345.00</span>元）</span></div></div>
<div class="a" style="left:586px;top:622px;width:76px;height:50px;display:flex;align-items:center;justify-content:center;text-align:center;white-space:nowrap;line-height:24px;font-size:14px;color:#333;padding:0 2px 0;-webkit-text-stroke-width:0.1px;"><div><span style="font-family:'Liberation Mono',monospace;font-size:13px;letter-spacing:-0.8px;display:inline-block;transform:scaleY(1.15);-webkit-text-stroke-width:0;opacity:0.85">2345.00</span>元</div></div>
<div class="a" style="left:663px;top:622px;width:63px;height:50px;display:flex;align-items:center;justify-content:center;text-align:center;white-space:nowrap;line-height:24px;font-size:14px;color:#333;padding:0 2px 0;-webkit-text-stroke-width:0.1px;"><div><span style="font-family:'Liberation Mono',monospace;font-size:13px;letter-spacing:-0.8px;display:inline-block;transform:scaleY(1.15);-webkit-text-stroke-width:0;opacity:0.85">1</span></div></div>
<div class="a" style="left:727px;top:622px;width:77px;height:50px;display:flex;align-items:center;justify-content:center;text-align:center;white-space:nowrap;line-height:24px;font-size:14px;color:#333;padding:0 2px 0;-webkit-text-stroke-width:0.1px;"><div><span style="font-family:'Liberation Mono',monospace;font-size:13px;letter-spacing:-0.8px;display:inline-block;transform:scaleY(1.15);-webkit-text-stroke-width:0;opacity:0.85">2345.00</span>元</div></div>
<div class="a" style="left:805px;top:622px;width:105px;height:50px;display:flex;align-items:center;justify-content:center;text-align:center;white-space:nowrap;line-height:24px;font-size:14px;color:#333;padding:0 2px 0;-webkit-text-stroke-width:0.1px;"><div><span style="font-family:'Liberation Mono',monospace;font-size:13px;letter-spacing:-0.8px;display:inline-block;transform:scaleY(1.15);-webkit-text-stroke-width:0;opacity:0.85">13027270303</span></div></div>
<div class="a" style="left:911px;top:622px;width:192px;height:50px;display:flex;align-items:center;justify-content:center;text-align:center;white-space:nowrap;line-height:24px;font-size:14px;color:#333;padding:0 2px 0;-webkit-text-stroke-width:0.1px;"><div>北京市&ensp;北京市&ensp;东城区&ensp;大街上<br>25号</div></div>
<div class="a" style="left:1104px;top:622px;width:67px;height:50px;display:flex;align-items:center;justify-content:center;text-align:center;white-space:nowrap;line-height:24px;font-size:14px;color:#333;padding:0 2px 0;-webkit-text-stroke-width:0.1px;"><div><span style="font-family:'Liberation Mono',monospace;font-size:13px;letter-spacing:-0.8px;display:inline-block;transform:scaleY(1.15);-webkit-text-stroke-width:0;opacity:0.85">332000</span></div></div>
<div class="a" style="left:1172px;top:622px;width:147px;height:50px;display:flex;align-items:center;justify-content:center;text-align:center;white-space:nowrap;line-height:24px;font-size:14px;color:#333;padding:0 2px 0;-webkit-text-stroke-width:0.1px;"><div></div></div>
<div class="a" style="left:1320px;top:622px;width:121px;height:50px;display:flex;align-items:center;justify-content:center;text-align:center;white-space:nowrap;line-height:24px;font-size:14px;color:#333;padding:0 2px 0;-webkit-text-stroke-width:0.1px;"><div><span style="font-family:'Liberation Mono',monospace;font-size:13px;letter-spacing:-0.8px;display:inline-block;transform:scaleY(1.15);-webkit-text-stroke-width:0;opacity:0.85">117.169.1.99</span></div></div>
<svg class="a" style="left:35px;top:691px" width="12" height="12" viewBox="0 0 12 12"><defs><linearGradient id="cg" x1="0" y1="0" x2="0" y2="1"><stop offset="0" stop-color="#f4f4f4"/><stop offset="1" stop-color="#d8d8d8"/></linearGradient></defs><rect x="0.5" y="0.5" width="11" height="11" rx="2" fill="url(#cg)" stroke="#a6a6a6"/></svg>
<div class="a" style="left:69px;top:673px;width:83px;height:50px;display:flex;align-items:center;justify-content:center;text-align:center;white-space:nowrap;line-height:24px;font-size:14px;color:#333;padding:0 2px 0;-webkit-text-stroke-width:0.1px;"><div><span style="font-family:'Liberation Mono',monospace;font-size:13px;letter-spacing:-0.8px;display:inline-block;transform:scaleY(1.15);-webkit-text-stroke-width:0;opacity:0.85">1475310757</span></div></div>
<div class="a" style="left:153px;top:673px;width:75px;height:50px;display:flex;align-items:center;justify-content:center;text-align:center;white-space:nowrap;line-height:24px;font-size:14px;color:#333;padding:0 2px 0;-webkit-text-stroke-width:0.1px;"><div>前台下单</div></div>
<div class="a" style="left:229px;top:673px;width:73px;height:50px;display:flex;align-items:center;justify-content:center;text-align:center;white-space:nowrap;line-height:24px;font-size:14px;color:#333;padding:0 2px 0;-webkit-text-stroke-width:0.1px;"><div>手机版</div></div>
<div class="a" style="left:303px;top:673px;width:84px;height:50px;display:flex;align-items:center;justify-content:center;text-align:center;white-space:nowrap;line-height:24px;font-size:14px;color:#333;padding:0 2px 0;-webkit-text-stroke-width:0.1px;"><div>杨凡</div></div>
<div class="a" style="left:388px;top:673px;width:197px;height:50px;display:flex;align-items:center;justify-content:center;text-align:center;white-space:nowrap;line-height:24px;font-size:14px;color:#333;padding:0 2px 0;-webkit-text-stroke-width:0.1px;"><div><span style="color:#3a9a3a">小米（<span style="font-family:'Liberation Mono',monospace;font-size:13px;letter-spacing:-0.8px;display:inline-block;transform:scaleY(1.15);-webkit-text-stroke-width:0;opacity:0.85">2345.00</span>元）</span></div></div>
<div class="a" style="left:586px;top:673px;width:76px;height:50px;display:flex;align-items:center;justify-content:center;text-align:center;white-space:nowrap;line-height:24px;font-size:14px;color:#333;padding:0 2px 0;-webkit-text-stroke-width:0.1px;"><div><span style="font-family:'Liberation Mono',monospace;font-size:13px;letter-spacing:-0.8px;display:inline-block;transform:scaleY(1.15);-webkit-text-stroke-width:0;opacity:0.85">2345.00</span>元</div></div>
<div class="a" style="left:663px;top:673px;width:63px;height:50px;display:flex;align-items:center;justify-content:center;text-align:center;white-space:nowrap;line-height:24px;font-size:14px;color:#333;padding:0 2px 0;-webkit-text-stroke-width:0.1px;"><div><span style="font-family:'Liberation Mono',monospace;font-size:13px;letter-spacing:-0.8px;display:inline-block;transform:scaleY(1.15);-webkit-text-stroke-width:0;opacity:0.85">1</span></div></div>
<div class="a" style="left:727px;top:673px;width:77px;height:50px;display:flex;align-items:center;justify-content:center;text-align:center;white-space:nowrap;line-height:24px;font-size:14px;color:#333;padding:0 2px 0;-webkit-text-stroke-width:0.1px;"><div><span style="font-family:'Liberation Mono',monospace;font-size:13px;letter-spacing:-0.8px;display:inline-block;transform:scaleY(1.15);-webkit-text-stroke-width:0;opacity:0.85">2345.00</span>元</div></div>
<div class="a" style="left:805px;top:673px;width:105px;height:50px;display:flex;align-items:center;justify-content:center;text-align:center;white-space:nowrap;line-height:24px;font-size:14px;color:#333;padding:0 2px 0;-webkit-text-stroke-width:0.1px;"><div><span style="font-family:'Liberation Mono',monospace;font-size:13px;letter-spacing:-0.8px;display:inline-block;transform:scaleY(1.15);-webkit-text-stroke-width:0;opacity:0.85">13571950422</span></div></div>
<div class="a" style="left:911px;top:673px;width:192px;height:50px;display:flex;align-items:center;justify-content:center;text-align:center;white-space:nowrap;line-height:24px;font-size:14px;color:#333;padding:0 2px 0;-webkit-text-stroke-width:0.1px;"><div>天津市&ensp;天津市&ensp;南开区&ensp;达瓦达<br>瓦5瓦打我</div></div>
<div class="a" style="left:1104px;top:673px;width:67px;height:50px;display:flex;align-items:center;justify-content:center;text-align:center;white-space:nowrap;line-height:24px;font-size:14px;color:#333;padding:0 2px 0;-webkit-text-stroke-width:0.1px;"><div><span style="font-family:'Liberation Mono',monospace;font-size:13px;letter-spacing:-0.8px;display:inline-block;transform:scaleY(1.15);-webkit-text-stroke-width:0;opacity:0.85">752441</span></div></div>
<div class="a" style="left:1172px;top:673px;width:147px;height:50px;display:flex;align-items:center;justify-content:center;text-align:center;white-space:nowrap;line-height:24px;font-size:14px;color:#333;padding:0 2px 0;-webkit-text-stroke-width:0.1px;"><div><span style="font-family:'Liberation Mono',monospace;font-size:13px;letter-spacing:-0.8px;display:inline-block;transform:scaleY(1.15);-webkit-text-stroke-width:0;opacity:0.85">9514154@qq.com</span></div></div>
<div class="a" style="left:1320px;top:673px;width:121px;height:50px;display:flex;align-items:center;justify-content:center;text-align:center;white-space:nowrap;line-height:24px;font-size:14px;color:#333;padding:0 2px 0;-webkit-text-stroke-width:0.1px;"><div><span style="font-family:'Liberation Mono',monospace;font-size:13px;letter-spacing:-0.8px;display:inline-block;transform:scaleY(1.15);-webkit-text-stroke-width:0;opacity:0.85">219.145.27.177</span></div></div>
<svg class="a" style="left:35px;top:742px" width="12" height="12" viewBox="0 0 12 12"><defs><linearGradient id="cg" x1="0" y1="0" x2="0" y2="1"><stop offset="0" stop-color="#f4f4f4"/><stop offset="1" stop-color="#d8d8d8"/></linearGradient></defs><rect x="0.5" y="0.5" width="11" height="11" rx="2" fill="url(#cg)" stroke="#a6a6a6"/></svg>
<div class="a" style="left:69px;top:724px;width:83px;height:50px;display:flex;align-items:center;justify-content:center;text-align:center;white-space:nowrap;line-height:24px;font-size:14px;color:#333;padding:0 2px 0;-webkit-text-stroke-width:0.1px;"><div><span style="font-family:'Liberation Mono',monospace;font-size:13px;letter-spacing:-0.8px;display:inline-block;transform:scaleY(1.15);-webkit-text-stroke-width:0;opacity:0.85">1475141581</span></div></div>
<div class="a" style="left:153px;top:724px;width:75px;height:50px;display:flex;align-items:center;justify-content:center;text-align:center;white-space:nowrap;line-height:24px;font-size:14px;color:#333;padding:0 2px 0;-webkit-text-stroke-width:0.1px;"><div>风形火影</div></div>
<div class="a" style="left:229px;top:724px;width:73px;height:50px;display:flex;align-items:center;justify-content:center;text-align:center;white-space:nowrap;line-height:24px;font-size:14px;color:#333;padding:0 2px 0;-webkit-text-stroke-width:0.1px;"><div>电脑版（经<br>典版）</div></div>
<div class="a" style="left:303px;top:724px;width:84px;height:50px;display:flex;align-items:center;justify-content:center;text-align:center;white-space:nowrap;line-height:24px;font-size:14px;color:#333;padding:0 2px 0;-webkit-text-stroke-width:0.1px;"><div><span style="font-family:'Liberation Mono',monospace;font-size:13px;letter-spacing:-0.8px;display:inline-block;transform:scaleY(1.15);-webkit-text-stroke-width:0;opacity:0.85">123131</span></div></div>
<div class="a" style="left:388px;top:724px;width:197px;height:50px;display:flex;align-items:center;justify-content:center;text-align:center;white-space:nowrap;line-height:24px;font-size:14px;color:#333;padding:0 2px 0;-webkit-text-stroke-width:0.1px;"><div>摄像（<span style="font-family:'Liberation Mono',monospace;font-size:13px;letter-spacing:-0.8px;display:inline-block;transform:scaleY(1.15);-webkit-text-stroke-width:0;opacity:0.85">1232.00</span>元）</div></div>
<div class="a" style="left:586px;top:724px;width:76px;height:50px;display:flex;align-items:center;justify-content:center;text-align:center;white-space:nowrap;line-height:24px;font-size:14px;color:#333;padding:0 2px 0;-webkit-text-stroke-width:0.1px;"><div><span style="font-family:'Liberation Mono',monospace;font-size:13px;letter-spacing:-0.8px;display:inline-block;transform:scaleY(1.15);-webkit-text-stroke-width:0;opacity:0.85">1232.00</span>元</div></div>
<div class="a" style="left:663px;top:724px;width:63px;height:50px;display:flex;align-items:center;justify-content:center;text-align:center;white-space:nowrap;line-height:24px;font-size:14px;color:#333;padding:0 2px 0;-webkit-text-stroke-width:0.1px;"><div><span style="font-family:'Liberation Mono',monospace;font-size:13px;letter-spacing:-0.8px;display:inline-block;transform:scaleY(1.15);-webkit-text-stroke-width:0;opacity:0.85">1</span></div></div>
<div class="a" style="left:727px;top:724px;width:77px;height:50px;display:flex;align-items:center;justify-content:center;text-align:center;white-space:nowrap;line-height:24px;font-size:14px;color:#333;padding:0 2px 0;-webkit-text-stroke-width:0.1px;"><div><span style="font-family:'Liberation Mono',monospace;font-size:13px;letter-spacing:-0.8px;display:inline-block;transform:scaleY(1.15);-webkit-text-stroke-width:0;opacity:0.85">1232.00</span>元</div></div>
<div class="a" style="left:805px;top:724px;width:105px;height:50px;display:flex;align-items:center;justify-content:center;text-align:center;white-space:nowrap;line-height:24px;font-size:14px;color:#333;padding:0 2px 0;-webkit-text-stroke-width:0.1px;"><div><span style="font-family:'Liberation Mono',monospace;font-size:13px;letter-spacing:-0.8px;display:inline-block;transform:scaleY(1.15);-webkit-text-stroke-width:0;opacity:0.85">131231233</span></div></div>
<div class="a" style="left:911px;top:724px;width:192px;height:50px;display:flex;align-items:center;justify-content:center;text-align:center;white-space:nowrap;line-height:24px;font-size:14px;color:#333;padding:0 2px 0;-webkit-text-stroke-width:0.1px;"><div>北京市&ensp;北京市&ensp;东城区<br><span style="font-family:'Liberation Mono',monospace;font-size:13px;letter-spacing:-0.8px;display:inline-block;transform:scaleY(1.15);-webkit-text-stroke-width:0;opacity:0.85">3131313</span></div></div>
<div class="a" style="left:1104px;top:724px;width:67px;height:50px;display:flex;align-items:center;justify-content:center;text-align:center;white-space:nowrap;line-height:24px;font-size:14px;color:#333;padding:0 2px 0;-webkit-text-stroke-width:0.1px;"><div><span style="font-family:'Liberation Mono',monospace;font-size:13px;letter-spacing:-0.8px;display:inline-block;transform:scaleY(1.15);-webkit-text-stroke-width:0;opacity:0.85">123121</span></div></div>
<div class="a" style="left:1172px;top:724px;width:147px;height:50px;display:flex;align-items:center;justify-content:center;text-align:center;white-space:nowrap;line-height:24px;font-size:14px;color:#333;padding:0 2px 0;-webkit-text-stroke-width:0.1px;"><div></div></div>
<div class="a" style="left:1320px;top:724px;width:121px;height:50px;display:flex;align-items:center;justify-content:center;text-align:center;white-space:nowrap;line-height:24px;font-size:14px;color:#333;padding:0 2px 0;-webkit-text-stroke-width:0.1px;"><div><span style="font-family:'Liberation Mono',monospace;font-size:13px;letter-spacing:-0.8px;display:inline-block;transform:scaleY(1.15);-webkit-text-stroke-width:0;opacity:0.85"></span></div></div>
<div class="a" style="left:1422px;top:0px;width:17px;height:757px;background:#f1f1f1"></div>
<svg class="a" style="left:1422px;top:1px" width="17" height="17" viewBox="0 0 17 17"><path d="M4.5 10 L8.5 5 L12.5 10Z" fill="#959595"/></svg>
<div class="a" style="left:1424px;top:17px;width:13px;height:177px;background:#bdbdbd;border:1px solid #a8a8a8"></div>
<div class="a" style="left:0px;top:757px;width:1422px;height:17px;background:#f1f1f1"></div>
<svg class="a" style="left:0px;top:757px" width="17" height="17" viewBox="0 0 17 17"><path d="M9.5 4.5 L4.5 8.5 L9.5 12.5Z" fill="#a3a3a3"/></svg>
<div class="a" style="left:16px;top:759px;width:990px;height:13px;background:#bdbdbd;border:1px solid #a8a8a8"></div>
<div class="a" style="left:1422px;top:757px;width:17px;height:17px;background:#f1f1f1"></div>
<svg class="a" style="left:0px;top:337px" width="18" height="62" viewBox="0 0 18 62"><path d="M0 0 L17 8.5 L17 49.5 L0 60Z" fill="#e6e6e6"/><path d="M5 29 L11.5 23 L11.5 36Z" fill="#aaa"/></svg>
</div>
<div id="footer"><div class="a" style="left:475px;top:8px;font-size:14px;line-height:20px;color:#555;letter-spacing:0.4px">Powered by 昱杰订单系统 © 2015-2020</div><div class="a" style="left:748px;top:11px;width:1px;height:14px;background:#555"></div><div class="a" style="left:765px;top:8px;font-size:14px;line-height:20px;color:#555;letter-spacing:0.13px">执行耗时：1.1463539600372秒</div></div>
<svg class="a" style="left:1377px;top:799px" width="262" height="88" viewBox="0 0 262 88"><rect width="262" height="88" fill="#fdd7a8"/><rect x="7.0" y="0" width="3" height="88" fill="#eec08f" opacity="0.55"/><rect x="42.5" y="0" width="3" height="88" fill="#eec08f" opacity="0.55"/><rect x="77.5" y="0" width="3" height="88" fill="#eec08f" opacity="0.55"/><rect x="112.5" y="0" width="3" height="88" fill="#eec08f" opacity="0.55"/><rect x="149.5" y="0" width="3" height="88" fill="#eec08f" opacity="0.55"/><rect x="184.5" y="0" width="3" height="88" fill="#eec08f" opacity="0.55"/><rect x="220.0" y="0" width="3" height="88" fill="#eec08f" opacity="0.55"/><rect x="255.5" y="0" width="3" height="88" fill="#eec08f" opacity="0.55"/><rect x="0" y="31" width="262" height="2.5" fill="#f2c18f" opacity="0.8"/><rect x="0" y="85" width="262" height="2.5" fill="#f2c18f" opacity="0.8"/></svg>
</body></html>
